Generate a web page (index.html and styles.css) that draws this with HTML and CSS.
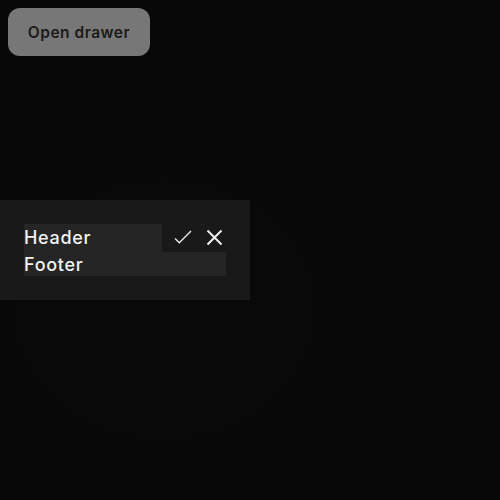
FILE: index.html
```html
<!DOCTYPE html>
<html>
<head>
<meta charset="utf-8">
<link rel="stylesheet" href="styles.css">
</head>
<body>
<button class="open-btn">Open drawer</button>
<div class="glow"></div>
<div class="drawer">
  <div class="rows">
    <div class="header-row">
      <div class="header-cell">Header</div>
      <div class="actions">
        <svg class="icon-check" width="18" height="16" viewBox="0 0 18 16"><path d="M1 8.5 L5.3 12.8 L17 1" fill="none" stroke="#e8e8e8" stroke-width="1.4"/></svg>
        <svg class="icon-x" width="17" height="17" viewBox="0 0 17 17"><path d="M1.5 1.5 L15.5 15.5 M15.5 1.5 L1.5 15.5" fill="none" stroke="#f0f0f0" stroke-width="2"/></svg>
      </div>
    </div>
    <div class="footer-cell">Footer</div>
  </div>
</div>
</body>
</html>
```

FILE: styles.css
```css
html, body {
  background: #080808;
}
body {
  margin: 8px;
  font-family: "Inter", "Noto Sans", sans-serif;
  overflow: hidden;
  height: 484px;
}
.open-btn {
  display: block;
  width: 142px;
  height: 48px;
  border: none;
  border-radius: 12px;
  background: #777777;
  color: #1a1a1a;
  font-family: "Inter", sans-serif;
  font-weight: 600;
  font-size: 15.5px;
  letter-spacing: 0.5px;
  padding: 0;
}
.glow {
  position: absolute;
  left: 12px;
  top: 178px;
  width: 304px;
  height: 262px;
  border-radius: 50%;
  background: #090909;
}
.drawer {
  position: absolute;
  left: 0;
  top: 200px;
  width: 250px;
  height: 100px;
  box-sizing: border-box;
  padding: 24px;
  background: #191919;
}
.rows {
  display: flex;
  flex-direction: column;
  width: 202px;
}
.header-row {
  display: flex;
  height: 28px;
}
.header-cell {
  width: 138px;
  background: #252525;
  color: #f2f2f2;
  font-size: 18px;
  font-weight: 500;
  letter-spacing: 0.7px;
  line-height: 28px;
}
.actions {
  display: flex;
  align-items: center;
  gap: 13.5px;
  padding-left: 12px;
}
.icon-x {
  margin-top: -2px;
}
.footer-cell {
  height: 24px;
  background: #252525;
  color: #f2f2f2;
  font-size: 18px;
  font-weight: 500;
  letter-spacing: 0.7px;
  line-height: 26px;
}
```
